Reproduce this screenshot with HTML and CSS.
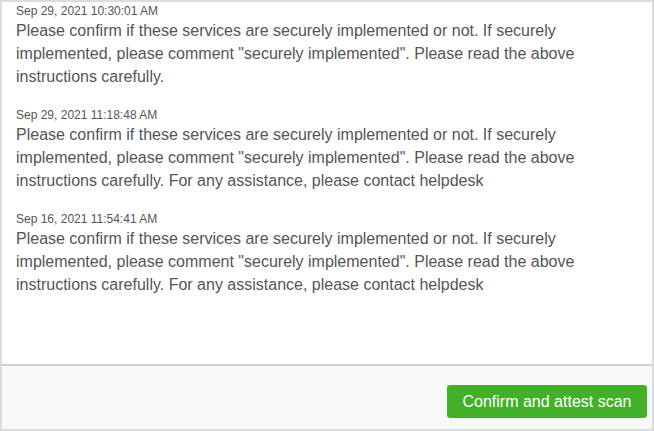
FILE: index.html
```html
<!DOCTYPE html>
<html>
<head>
<meta charset="utf-8">
<link rel="stylesheet" href="styles.css">
</head>
<body>
<div class="panel">
  <div class="comments">
    <div class="comment">
      <div class="time">Sep 29, 2021 10:30:01 AM</div>
      <div class="text">Please confirm if these services are securely implemented or not. If securely implemented, please comment "securely implemented". Please read the above instructions carefully.</div>
    </div>
    <div class="comment">
      <div class="time">Sep 29, 2021 11:18:48 AM</div>
      <div class="text">Please confirm if these services are securely implemented or not. If securely implemented, please comment "securely implemented". Please read the above instructions carefully. For any assistance, please contact helpdesk</div>
    </div>
    <div class="comment">
      <div class="time">Sep 16, 2021 11:54:41 AM</div>
      <div class="text">Please confirm if these services are securely implemented or not. If securely implemented, please comment "securely implemented". Please read the above instructions carefully. For any assistance, please contact helpdesk</div>
    </div>
  </div>
  <div class="footer">
    <button class="btn">Confirm and attest scan</button>
  </div>
</div>
</body>
</html>
```

FILE: styles.css
```css
html, body {
  margin: 0;
  padding: 0;
  background: #ffffff;
}
body {
  font-family: "Liberation Sans", Arial, sans-serif;
  color: #555555;
}
.panel {
  width: 654px;
  height: 431px;
  box-sizing: border-box;
  border: 2px solid #dcdcdc;
  display: flex;
  flex-direction: column;
}
.comments {
  flex: 1;
  padding: 2px 14px 0 14px;
  background: #ffffff;
}
.comment {
  margin-bottom: 20px;
}
.time {
  font-size: 12px;
  line-height: 15px;
}
.text {
  font-size: 16px;
  line-height: 23px;
  max-width: 590px;
}
.footer {
  height: 65px;
  border-top: 2px solid #d0d0d0;
  background: #f8f8f8;
  display: flex;
  justify-content: flex-end;
  align-items: flex-start;
  padding: 19px 5px 0 0;
  box-sizing: border-box;
}
.btn {
  width: 200px;
  height: 33px;
  border: none;
  border-radius: 3px;
  background: #43b02a;
  color: #ffffff;
  font-family: "Liberation Sans", Arial, sans-serif;
  font-size: 16px;
  padding: 0;
}
```
